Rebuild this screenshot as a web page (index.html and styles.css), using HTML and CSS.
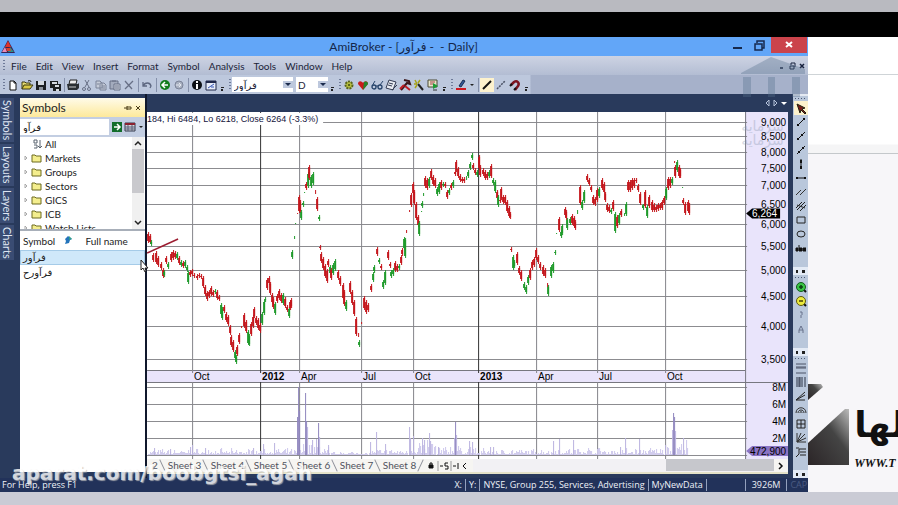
FILE: index.html
```html
<!DOCTYPE html>
<html lang="en">

<head>
    <meta charset="UTF-8">
    <meta name="viewport" content="width=device-width, initial-scale=1.0">
    <title>AmiBroker</title>
    <link rel="stylesheet" href="styles.css">
</head>

<body>
    <div class="strip-top"></div>
    <div class="strip-black"></div>

    <div class="desktop">
        <div class="app">
            <header class="titlebar">
                <svg class="logo" viewBox="0 0 14 14"><path d="M7 0L14 13H0z" fill="#3b2352"/><path d="M7 1L10 7H4z" fill="#e0342c"/><path d="M4 7L6 12H1z" fill="#e98bb8"/><path d="M9 7L13 12H7z" fill="#2f8f8a"/><path d="M5 8h4l1 3H6z" fill="#d8432e"/></svg>
                <h1>AmiBroker - [<bdi>فرآور</bdi> -&nbsp; - Daily]</h1>
                <div class="win-buttons">
                    <button aria-label="Minimize"><svg viewBox="0 0 14 14"><path d="M2 10h9" stroke="#16294d" stroke-width="2"/></svg></button>
                    <button aria-label="Restore"><svg viewBox="0 0 14 14"><path d="M2 6h7v6H2zM4 5V3h7v7H9M4 3h7M2 6h7" fill="none" stroke="#16294d" stroke-width="1.5"/></svg></button>
                    <button class="close" aria-label="Close"><svg viewBox="0 0 14 14"><path d="M4 4l6 5M10 4l-6 5" stroke="#fff" stroke-width="2"/></svg></button>
                </div>
            </header>

            <nav class="menubar">
                <i class="grip"></i>
                <button>File</button>
                <button>Edit</button>
                <button>View</button>
                <button>Insert</button>
                <button>Format</button>
                <button>Symbol</button>
                <button>Analysis</button>
                <button>Tools</button>
                <button>Window</button>
                <button>Help</button>
                <div class="mdi-buttons">
                    <button aria-label="Minimize chart"><svg viewBox="0 0 10 10"><path d="M3 7h3" stroke="#16203c" stroke-width="1.5"/></svg></button>
                    <button aria-label="Restore chart"><svg viewBox="0 0 10 10"><path d="M3 5h4v3H3zM4 4V2h4v4" fill="none" stroke="#16203c"/></svg></button>
                    <button aria-label="Close chart"><svg viewBox="0 0 10 10"><path d="M3 3l4 4M7 3L3 7" stroke="#16203c" stroke-width="1.5"/></svg></button>
                </div>
            </nav>

            <div class="toolbar">
                <i class="grip"></i>
                <button aria-label="New"><svg viewBox="0 0 14 14"><path d="M4 3h4l2 2v7H4z" fill="#fff" stroke="#111"/><path d="M8 3v2h2" fill="none" stroke="#111"/></svg></button>
                <button aria-label="Open"><svg viewBox="0 0 14 14"><path d="M2 11V4h3l1 1h4v2" fill="#e6dc72" stroke="#3d3a10"/><path d="M2 11l2-4h9l-3 4z" fill="#d9c845" stroke="#3d3a10"/><path d="M8 3c2-1 3 0 3 1" fill="none" stroke="#111"/></svg></button>
                <button aria-label="Save"><svg viewBox="0 0 14 14"><path d="M2 3h10v9H2z" fill="#1c1f22"/><path d="M4 3h6v4H4z" fill="#d5dae0"/><path d="M5 9h4v3H5z" fill="#8b9199"/></svg></button>
                <button aria-label="Save all"><svg viewBox="0 0 14 14"><path d="M2 3h8v7H2zM5 6h8v7H5z" fill="#1c1f22"/><path d="M4 4h5v2H4zM7 7h4v2H7zM8 11h3v2H8z" fill="#d5dae0"/></svg></button>
                <i class="sep"></i>
                <button aria-label="Print"><svg viewBox="0 0 14 14"><path d="M4 2h7l-1 4H3z" fill="#eee" stroke="#222"/><path d="M1 6h11l1-1v5l-2 2H2z" fill="#2b2f33"/><path d="M3 9h7" stroke="#ccc"/></svg></button>
                <button aria-label="Cut"><svg viewBox="0 0 14 14"><path d="M5 2l4 7M9 2L5 9" stroke="#687086" fill="none"/><circle cx="4" cy="11" r="1.5" fill="none" stroke="#687086"/><circle cx="9" cy="11" r="1.5" fill="none" stroke="#687086"/></svg></button>
                <button aria-label="Copy"><svg viewBox="0 0 14 14"><path d="M2 3h4l2 2v5H2zM6 5h4l2 2v5H6zM8 8h3M8 10h3M3 6h2" fill="#c5cbd8" stroke="#7b8398"/></svg></button>
                <button aria-label="Paste"><svg viewBox="0 0 14 14"><path d="M2 3h8v8H2z" fill="#a3abbd" stroke="#687086"/><path d="M6 6h6v6H6zM7 8h4M7 10h4M4 3h4" fill="#d0d5e0" stroke="#687086"/></svg></button>
                <button aria-label="Delete"><svg viewBox="0 0 14 14"><path d="M3 3l7 8M11 3L3 11" stroke="#687086" stroke-width="1.3"/></svg></button>
                <i class="sep"></i>
                <button aria-label="Undo"><svg viewBox="0 0 14 14"><path d="M3 4v4h4M3 8c2-4 7-4 8 0l-1 2" fill="none" stroke="#5d6780" stroke-width="1.3"/></svg></button>
                <i class="sep"></i>
                <button aria-label="Back"><svg viewBox="0 0 14 14"><circle cx="7" cy="7" r="5" fill="#137b1d"/><path d="M10 7H4M7 4L4 7l3 3" fill="none" stroke="#fff" stroke-width="1.5"/></svg></button>
                <button aria-label="Forward"><svg viewBox="0 0 14 14"><circle cx="7" cy="7" r="4" fill="#a8b0c0" stroke="#7b8499"/><path d="M4 7h5M7 5l2 2-2 2" fill="none" stroke="#e4e8f0"/></svg></button>
                <i class="sep"></i>
                <button aria-label="Information"><svg viewBox="0 0 14 14"><circle cx="7" cy="7" r="5" fill="#0c0f14"/><path d="M7 3v2M7 6v5" stroke="#fff" stroke-width="2"/></svg></button>
                <button aria-label="Properties"><svg viewBox="0 0 14 14"><path d="M2 3h10v9H2z" fill="#e7ecf8" stroke="#20284a"/><path d="M2 4h10" stroke="#20284a" stroke-width="2"/><path d="M4 10l6-4M7 9h3" stroke="#3554b4"/></svg></button>
                <i class="more"></i>
                <i class="grip"></i>
                <span class="combo combo-symbol"><select aria-label="Symbol"><option>فرآور</option></select></span>
                <span class="combo combo-period"><select aria-label="Period"><option>D</option></select></span>
                <i class="more"></i>
                <i class="grip"></i>
                <button aria-label="Preferences"><svg viewBox="0 0 14 14"><circle cx="7" cy="7" r="3.5" fill="#b5bd3d" stroke="#59641d" stroke-width="2" stroke-dasharray="2 1"/><circle cx="7" cy="7" r="1" fill="#3f4812"/></svg></button>
                <button aria-label="Favorites"><svg viewBox="0 0 14 14"><path d="M7 12L2 6c0-4 4-3 5-1 1-2 5-3 5 1z" fill="#c91a1a"/><path d="M7 12l5-6c0-3-3-3-4-2z" fill="#25852b"/></svg></button>
                <button aria-label="Explore"><svg viewBox="0 0 14 14"><circle cx="4" cy="9" r="2" fill="none" stroke="#26436a" stroke-width="1.3"/><circle cx="10" cy="9" r="2" fill="none" stroke="#26436a" stroke-width="1.3"/><path d="M2 8l3-5M6 8h2M10 7l3-4" stroke="#26436a"/></svg></button>
                <button aria-label="Notes"><svg viewBox="0 0 14 14"><path d="M5 2l7 2-3 8-7-2z" fill="#e8ebf2" stroke="#333b52"/><path d="M5 5l4 1M4 7l4 1M8 12l5-5" stroke="#333b52"/></svg></button>
                <button aria-label="Formula"><svg viewBox="0 0 14 14"><path d="M6 2l5 1 1 3-3-1-6 7" fill="none" stroke="#3a1518" stroke-width="2"/><path d="M2 11l4-4M7 8l5 4" stroke="#bd1d25" stroke-width="2"/></svg></button>
                <button aria-label="Wizard"><svg viewBox="0 0 14 14"><path d="M6 6l5 6" stroke="#222" stroke-width="2"/><path d="M3 2l2 4M8 2L6 5M2 6h3M3 10l2-3" stroke="#a8a315" stroke-width="1.5"/></svg></button>
                <button aria-label="Run"><svg viewBox="0 0 14 14"><path d="M2 2h9v7H2z" fill="#e8e6c8" stroke="#4b4b35"/><path d="M4 4h5M4 6h3" stroke="#a6434b"/><path d="M7 5l5 3-5 3z" fill="#1e9a34"/><path d="M7 12h4" stroke="#333"/></svg></button>
                <i class="more"></i>
                <i class="grip"></i>
                <button aria-label="Line color"><svg viewBox="0 0 14 14"><path d="M5 8l4-6 2 1-4 6z" fill="#315a9a" stroke="#1d2c50"/><path d="M2 11h10" stroke="#cf1820" stroke-width="2"/></svg></button>
                <i class="drop"></i>
                <i class="sep"></i>
                <button class="active" aria-label="Solid line"><svg viewBox="0 0 14 14"><path d="M3 11l8-8" stroke="#111" stroke-width="2"/></svg></button>
                <button aria-label="Dotted line"><svg viewBox="0 0 14 14"><path d="M3 11l8-8" stroke="#4a5164" stroke-width="1.5" stroke-dasharray="2 1"/></svg></button>
                <button aria-label="Magnet"><svg viewBox="0 0 14 14"><path d="M3 7l3-3c3-2 6 1 4 4l-3 4" fill="none" stroke="#7b1420" stroke-width="2.5"/><path d="M2 8l2-2M6 12l2-2" stroke="#111" stroke-width="2"/></svg></button>
                <i class="more"></i>
            </div>

            <main class="workspace">
                <div class="side-tabs">
                    <button>Symbols</button>
                    <button>Layouts</button>
                    <button>Layers</button>
                    <button>Charts</button>
                </div>

                <aside class="panel">
                    <div class="panel-head">
                        <h2>Symbols</h2>
                        <button aria-label="Pin"><svg viewBox="0 0 10 10"><path d="M1 5h3M4 3v4M4 4h4v2H4" fill="none" stroke="#4a3c18"/></svg></button>
                        <button aria-label="Close panel"><svg viewBox="0 0 10 10"><path d="M3 3l4 4M7 3L3 7" stroke="#4a3c18"/></svg></button>
                    </div>
                    <div class="panel-search">
                        <input type="text" value="فرآو" aria-label="Search symbols">
                        <button aria-label="Go"><svg viewBox="0 0 12 12"><path d="M1 1h10v10H1z" fill="#126d2b"/><path d="M3 6h5M6 3l3 3-3 3" fill="none" stroke="#fff" stroke-width="1.5"/></svg></button>
                        <button aria-label="Columns"><svg viewBox="0 0 12 12"><path d="M1 2h10v8H1z" fill="#d8d8de" stroke="#343a4c"/><path d="M1 3h10" stroke="#8c2230" stroke-width="2"/><path d="M1 6h10M1 8h10M4 4v6M8 4v6" stroke="#596179"/></svg></button>
                        <i class="drop"></i>
                    </div>
                    <div class="tree-box">
                        <ul class="tree">
                            <li><svg viewBox="0 0 24 12"><path d="M11 2h3v3h-3zM11 7h3v3h-3M17 2v8M15 8l2 2 2-2" fill="none" stroke="#59636e"/></svg>All</li>
                            <li><svg viewBox="0 0 24 12"><path d="M2 4l2 2-2 2z" fill="none" stroke="#aaa"/><path d="M9 10V3h3l1 1h5v6z" fill="#f4ee8e" stroke="#6d6a20"/></svg>Markets</li>
                            <li><svg viewBox="0 0 24 12"><path d="M2 4l2 2-2 2z" fill="none" stroke="#aaa"/><path d="M9 10V3h3l1 1h5v6z" fill="#f4ee8e" stroke="#6d6a20"/></svg>Groups</li>
                            <li><svg viewBox="0 0 24 12"><path d="M2 4l2 2-2 2z" fill="none" stroke="#aaa"/><path d="M9 10V3h3l1 1h5v6z" fill="#f4ee8e" stroke="#6d6a20"/></svg>Sectors</li>
                            <li><svg viewBox="0 0 24 12"><path d="M2 4l2 2-2 2z" fill="none" stroke="#aaa"/><path d="M9 10V3h3l1 1h5v6z" fill="#f4ee8e" stroke="#6d6a20"/></svg>GICS</li>
                            <li><svg viewBox="0 0 24 12"><path d="M2 4l2 2-2 2z" fill="none" stroke="#aaa"/><path d="M9 10V3h3l1 1h5v6z" fill="#f4ee8e" stroke="#6d6a20"/></svg>ICB</li>
                            <li><svg viewBox="0 0 24 12"><path d="M2 4l2 2-2 2z" fill="none" stroke="#aaa"/><path d="M9 10V3h3l1 1h5v6z" fill="#f4ee8e" stroke="#6d6a20"/></svg>Watch Lists</li>
                        </ul>
                        <div class="scroll-v">
                            <svg viewBox="0 0 12 12"><path d="M3 8l3-3 3 3" fill="none" stroke="#222" stroke-width="1.5"/></svg>
                            <i></i>
                            <svg viewBox="0 0 12 12"><path d="M3 4l3 3 3-3" fill="none" stroke="#222" stroke-width="1.5"/></svg>
                        </div>
                    </div>
                    <table class="symbols">
                        <thead>
                            <tr>
                                <th>Symbol <svg viewBox="0 0 10 10"><path d="M5 1l4 3-2 1-1 3-4 1 1-3-1-2z" fill="#2474bb"/><path d="M6 1l3 3-3 1z" fill="#31a08a"/></svg></th>
                                <th>Full name</th>
                            </tr>
                        </thead>
                        <tbody>
                            <tr class="selected"><td>فرآور</td><td></td></tr>
                            <tr><td>فرآورح</td><td></td></tr>
                        </tbody>
                    </table>
                    <svg class="cursor" viewBox="0 0 9 14"><path d="M1 1v10l2-2 2 4 1-1-1-3h3z" fill="#fff" stroke="#222"/></svg>
                </aside>

                <section class="chart-window">
                    <div class="chart-head">
                        <svg viewBox="0 0 24 10"><path d="M5 2L2 5l3 3zM10 2l3 3-3 3z" fill="none" stroke="#b8c4dc"/><path d="M17 4h6l-3 3z" fill="#fff"/></svg>
                    </div>
                    <svg id="chart" class="chart" viewBox="147 112 641 347"></svg>
                    <div class="sheets">
                        <button class="first">2</button>
                        <button>Sheet 3</button>
                        <button>Sheet 4</button>
                        <button>Sheet 5</button>
                        <button>Sheet 6</button>
                        <button>Sheet 7</button>
                        <button>Sheet 8</button>
                        <svg class="sheet-icons" viewBox="0 0 48 14"><path d="M4 6h4v3H4z" fill="#111" stroke="#111"/><path d="M5 6V4h2v2" fill="none" stroke="#111"/><path d="M13 2v10M26 2v10" stroke="#999"/><path d="M15 7h3M23 4h-3v3h3v3h-3M28 7h3M33 4v6M41 4l-3 3 3 3" fill="none" stroke="#111"/></svg>
                        <div class="scroll-h"><i></i></div>
                        <svg class="arrow" viewBox="0 0 10 14"><path d="M3 4l3 3-3 3" fill="none" stroke="#111" stroke-width="1.5"/></svg>
                    </div>
                </section>

                <div class="draw-tools">
                    <div class="group tall">
                        <i class="grip-h"></i>
                        <button class="active" aria-label="Select"><svg viewBox="0 0 14 14"><path d="M3 3l8 4-3 1 4 4-1 1-4-4-1 3z" fill="#7b1c18" stroke="#221"/></svg></button>
                        <button aria-label="Trend line"><svg viewBox="0 0 14 14"><path d="M3 11l8-8" stroke="#111"/><path d="M3 9h2v2H3zM9 3h2v2H9z" fill="#111"/></svg></button>
                        <button aria-label="Ray"><svg viewBox="0 0 14 14"><path d="M3 11l8-8" stroke="#111"/><path d="M3 9h2v2H3zM7 5h2v2H7z" fill="#111"/></svg></button>
                        <button aria-label="Extended line"><svg viewBox="0 0 14 14"><path d="M3 11l8-8" stroke="#111"/><path d="M4 8h2v2H4zM8 4h2v2H8z" fill="#111"/></svg></button>
                        <button aria-label="Vertical line"><svg viewBox="0 0 14 14"><path d="M7 2v10" stroke="#111"/><path d="M6 3h2v3H6zM6 9h2v3H6z" fill="#111"/></svg></button>
                        <button aria-label="Horizontal line"><svg viewBox="0 0 14 14"><path d="M2 7h10" stroke="#111"/><path d="M2 6h2v2H2zM10 6h2v2h-2z" fill="#111"/></svg></button>
                        <button aria-label="Parallel lines"><svg viewBox="0 0 14 14"><path d="M2 10l5-5M6 10l6-6" stroke="#333"/></svg></button>
                        <button aria-label="Pitchfork"><svg viewBox="0 0 14 14"><path d="M2 9l6-6M3 11l8-8M6 12l6-6M3 6l8 3" stroke="#222"/></svg></button>
                        <button aria-label="Rectangle"><svg viewBox="0 0 14 14"><path d="M3 4h8v6H3z" fill="none" stroke="#222"/></svg></button>
                        <button aria-label="Ellipse"><svg viewBox="0 0 14 14"><ellipse cx="7" cy="7" rx="4" ry="3" fill="none" stroke="#222"/></svg></button>
                        <button aria-label="Text"><svg viewBox="0 0 14 14"><path d="M2 7h2v3H2zM5 4v6h3V7H5M12 7H9v3h3" fill="#111" stroke="#111"/></svg></button>
                        <i class="more-h"></i>
                    </div>
                    <div class="group mid">
                        <i class="grip-h"></i>
                        <button aria-label="Zoom in"><svg viewBox="0 0 14 14"><path d="M10 10l2 2" stroke="#111" stroke-width="2"/><circle cx="7" cy="7" r="4.5" fill="#38c544" stroke="#125b1c"/><path d="M5 7h4M7 5v4" stroke="#0b3d12" stroke-width="1.5"/></svg></button>
                        <button aria-label="Zoom out"><svg viewBox="0 0 14 14"><path d="M10 10l2 2" stroke="#111" stroke-width="2"/><circle cx="7" cy="7" r="4.5" fill="#ecea3c" stroke="#5a5811"/><path d="M5 7h4" stroke="#44410b" stroke-width="1.5"/></svg></button>
                        <button aria-label="Bar down"><svg viewBox="0 0 14 14"><path d="M6 4h2v3M7 7v3" fill="none" stroke="#66708a"/></svg></button>
                        <button aria-label="Bar up"><svg viewBox="0 0 14 14"><path d="M5 11V8l2-4 2 4v3M5 8h4" fill="none" stroke="#66708a"/></svg></button>
                        <i class="more-h"></i>
                    </div>
                    <div class="group low">
                        <i class="grip-h"></i>
                        <button aria-label="Fibonacci levels"><svg viewBox="0 0 14 14"><path d="M2 3h10M2 6h10M2 7h10M2 12h10" stroke="#4a5266"/></svg></button>
                        <button aria-label="Time zones"><svg viewBox="0 0 14 14"><path d="M3 2v10M5 2v10M6 2v10M8 2v10M11 2v10" stroke="#2d3446"/></svg></button>
                        <button aria-label="Fan"><svg viewBox="0 0 14 14"><path d="M2 11l9-8M2 11l9-5M2 11h9" fill="none" stroke="#222"/></svg></button>
                        <button aria-label="Arcs"><svg viewBox="0 0 14 14"><path d="M2 10c0-7 10-7 10 0M4 10c0-4 6-4 6 0M6 10c0-2 2-2 2 0" fill="none" stroke="#333"/></svg></button>
                        <button aria-label="Gann square"><svg viewBox="0 0 14 14"><path d="M3 3h8v8H3zM7 3v8M3 7h8" fill="none" stroke="#222"/></svg></button>
                        <button aria-label="Gann fan"><svg viewBox="0 0 14 14"><path d="M3 2v9h9M3 11L7 2M3 11l8-8M3 11l9-4" fill="none" stroke="#333"/></svg></button>
                        <button aria-label="Cycles"><svg viewBox="0 0 14 14"><path d="M2 12l3-3V4h7M6 7h6M6 10h6M2 3h3" fill="none" stroke="#222"/></svg></button>
                        <i class="more-h"></i>
                    </div>
                </div>
            </main>

            <footer class="statusbar">
                <span class="help">For Help, press F1</span>
                <span>X:</span>
                <span>Y:</span>
                <span>NYSE, Group 255, Services, Advertising</span>
                <span class="db">MyNewData</span>
                <span class="mem">3926M</span>
                <span class="caps">CAP</span>
            </footer>

            <div class="watermark">
                <svg viewBox="0 0 67 40"><path d="M0 16L30 0l34 12v5H0zM2 20h8v20H2zM27 20h7v20h-7zM51 20h8v20h-8z"/></svg>
                <p>سرمایه<br>سرمایه</p>
            </div>
            <div class="channel">aparat.com/boobgtsi_agah</div>
        </div>

        <div class="page">
            <div class="page-bar"></div>
            <div class="page-band"></div>
            <div class="page-body">
                <svg class="brand-mark" viewBox="0 0 42 90">
                    <defs>
                        <linearGradient id="metal" x1="1" y1="0" x2="0" y2="1">
                            <stop offset="0" stop-color="#bbb"/>
                            <stop offset="0.4" stop-color="#444"/>
                            <stop offset="1" stop-color="#2b2527"/>
                        </linearGradient>
                    </defs>
                    <path d="M0 8l13 0 2 3L0 24z" fill="url(#metal)"/>
                    <path d="M0 67L37 33l4 0v56H0z" fill="url(#metal)"/>
                </svg>
                <div class="brand-text">
                    <b>لها</b>
                    <a href="#">WWW.T</a>
                </div>
            </div>
        </div>
    </div>

    <div class="strip-bottom"></div>

    <script src="chart.js"></script>
</body>

</html>
```
FILE: styles.css
```css
* {
    margin: 0;
    padding: 0;
    box-sizing: border-box;
}

body {
    display: flex;
    flex-direction: column;
    height: 100vh;
    overflow: hidden;
    font-family: Lato, "DejaVu Sans", sans-serif;
    font-size: 10px;
    color: #1c2438;
}

button,
input,
select {
    font: inherit;
    color: inherit;
    border: 0;
    background: none;
}

svg {
    display: block;
    flex: none;
}

.strip-top {
    height: 12px;
    background: #b9bac0;
}

.strip-black {
    height: 25px;
    background: #000;
}

.strip-bottom {
    height: 13px;
    background: #cacbd5;
}

.desktop {
    flex: 1;
    min-height: 0;
    display: grid;
    grid-template-columns: minmax(0, 9fr) minmax(0, 1fr);
}

.app {
    position: relative;
    display: flex;
    flex-direction: column;
    min-height: 0;
    background: #293a5c;
}

/* title and menu */

.titlebar {
    display: flex;
    align-items: center;
    height: 19px;
    background: #62a6f8;
}

.logo {
    width: 14px;
    height: 14px;
    margin-left: 1px;
}

.titlebar h1 {
    flex: 1;
    padding-left: 65px;
    font-size: 12px;
    font-weight: 400;
    text-align: center;
    color: #14264a;
}

.win-buttons {
    display: flex;
    align-self: flex-start;
}

.win-buttons button {
    width: 22px;
    height: 16px;
    padding: 1px 4px;
}

.win-buttons svg {
    width: 14px;
    height: 14px;
}

.win-buttons .close {
    width: 36px;
    padding-left: 11px;
    margin-right: 1px;
    background: #cb434b;
}

.menubar,
.toolbar {
    display: flex;
    align-items: center;
    height: 19px;
}

.menubar {
    gap: 1px;
    background: linear-gradient(#cdd3e3, #b3bdd3);
}

.menubar > button {
    padding: 0 4px;
}

.mdi-buttons {
    display: flex;
    margin-left: auto;
    margin-right: 1px;
}

.mdi-buttons svg {
    width: 10px;
    height: 10px;
}

.toolbar {
    background: linear-gradient(to right, #bdc8dd 530px, #a6b1ca 531px);
}

.grip {
    width: 2px;
    height: 12px;
    margin: 0 1px 0 3px;
    background: repeating-linear-gradient(#6e7a98 0 1px, transparent 1px 3px);
}

.toolbar button,
.draw-tools button {
    width: 14px;
    height: 14px;
}

.toolbar .active,
.draw-tools .active {
    background: #fdf2cd;
}

.sep {
    width: 1px;
    height: 14px;
    margin: 0 1px 0 2px;
    background: #8590aa;
}

.more {
    width: 4px;
    height: 12px;
    margin: 0 2px;
    background: linear-gradient(#222 0 0) center 8px / 3px 1px no-repeat, linear-gradient(#222 0 0) center 10px / 2px 2px no-repeat;
}

.drop {
    margin: 0 2px;
    border: 2px solid transparent;
    border-top-color: #222;
    border-bottom: 0;
}

.combo {
    position: relative;
    height: 15px;
    background: #fff;
}

.combo select {
    appearance: none;
    width: 100%;
    height: 15px;
    padding-left: 2px;
}

.combo::after {
    content: "";
    position: absolute;
    right: 2px;
    top: 6px;
    border: 3px solid transparent;
    border-top-color: #1b2a4c;
    border-bottom: 0;
    outline: 2px solid #bdc8dd;
    background: #bdc8dd;
}

.combo-symbol {
    width: 61px;
    margin-right: 3px;
}

.combo-period {
    width: 32px;
}

/* left side */

.workspace {
    flex: 1;
    min-height: 0;
    display: flex;
}

.side-tabs {
    display: flex;
    flex-direction: column;
    gap: 2px;
    width: 20px;
    padding-top: 4px;
}

.side-tabs button {
    width: 14px;
    padding: 2px 0;
    writing-mode: vertical-rl;
    font-size: 11px;
    line-height: 14px;
    color: #dfe5f2;
    background: #3a4c73;
}

.panel {
    position: relative;
    width: 125px;
    margin-top: 4px;
    margin-bottom: 6px;
    background: #fff;
    color: #222;
}

.panel-head {
    display: flex;
    align-items: center;
    height: 19px;
    padding: 0 2px;
    background: linear-gradient(#fffbe9, #fde99b);
}

.panel-head h2 {
    flex: 1;
    font-size: 12px;
    font-weight: 400;
}

.panel-head svg {
    width: 10px;
    height: 10px;
}

.panel-search {
    display: flex;
    align-items: center;
    height: 20px;
    background: #c3cee2;
}

.panel-search input {
    flex: 1;
    min-width: 0;
    height: 16px;
    margin-right: 2px;
    padding-left: 3px;
    background: #fff;
}

.panel-search svg {
    width: 12px;
    height: 12px;
    margin-right: 1px;
}

.tree-box {
    display: flex;
    height: 94px;
    border-bottom: 2px solid #a8afb9;
}

.tree {
    flex: 1;
    list-style: none;
    overflow: hidden;
}

.tree li {
    display: flex;
    align-items: center;
    height: 14px;
    padding-left: 3px;
}

.tree svg {
    width: 24px;
    height: 12px;
    margin-right: -2px;
}

.scroll-v {
    display: flex;
    flex-direction: column;
    width: 12px;
    margin-right: 1px;
    background: #f0f0f0;
}

.scroll-v i {
    flex: 1;
    margin-bottom: 24px;
    background: #c9c9cd;
}

.symbols {
    width: 100%;
    table-layout: fixed;
    border-collapse: collapse;
}

.symbols th {
    height: 19px;
    padding: 0 3px;
    font-weight: 400;
    text-align: left;
}

.symbols th svg {
    display: inline-block;
    width: 10px;
    height: 10px;
    margin-left: 5px;
}

.symbols td {
    height: 15px;
    padding-left: 3px;
    line-height: 15px;
}

.symbols .selected {
    background: #cfe8fa;
    outline: 1px solid #a5cbe8;
    outline-offset: -1px;
}

.cursor {
    position: absolute;
    left: 120px;
    top: 161px;
    width: 9px;
    height: 14px;
    z-index: 1;
}

/* chart */

.chart-window {
    flex: 1;
    min-width: 0;
    display: flex;
    flex-direction: column;
    border-left: 2px solid #10182c;
    margin-right: 5px;
}

.chart-head {
    display: flex;
    justify-content: flex-end;
    align-items: center;
    height: 18px;
}

.chart-head svg {
    width: 24px;
    height: 10px;
}

.chart {
    flex: 1;
    min-height: 0;
    width: 100%;
    background: #fff;
    font-family: "Liberation Sans", Arial, sans-serif;
    font-size: 10px;
}

.chart .title {
    fill: #14143c;
}

.chart .price {
    text-anchor: end;
}

.sheets {
    display: flex;
    height: 15px;
    margin-bottom: 4px;
    background: #f6f5f2;
    border-bottom: 2px solid #e4e2c8;
    color: #50525c;
}

.sheets button {
    position: relative;
    width: 43px;
    line-height: 13px;
    text-align: center;
}

.sheets .first {
    width: 16px;
}

.sheets button::after {
    content: "";
    position: absolute;
    right: 0;
    top: 0;
    width: 1px;
    height: 13px;
    background: #8d8f98;
    transform: rotate(-25deg);
}

.sheets button:nth-child(7)::after {
    transform: rotate(25deg);
}

.sheet-icons {
    width: 48px;
    height: 14px;
    margin-left: 4px;
}

.scroll-h {
    flex: 1;
    background: #f2f1f4;
}

.scroll-h i {
    display: block;
    width: 36%;
    height: 12px;
    margin-left: auto;
    background: #c6c7cc;
}

.arrow {
    width: 14px;
    height: 14px;
}

/* drawing tools */

.draw-tools {
    display: flex;
    flex-direction: column;
    width: 15px;
    padding-top: 2px;
    background: #e4e9f2;
}

.group {
    display: flex;
    flex-direction: column;
    align-items: center;
    min-height: 0;
    background: #b9c7db;
}

.tall {
    flex: 178 1 0;
}

.mid {
    flex: 81 1 0;
}

.low {
    flex: 121 1 0;
}

.grip-h {
    width: 11px;
    height: 1px;
    margin: 2px 0;
    background: repeating-linear-gradient(to right, #4c5873 0 1px, transparent 1px 3px);
}

.more-h {
    width: 15px;
    height: 8px;
    margin-top: auto;
    background: linear-gradient(#222 0 0) 3px 3px / 2px 3px no-repeat, linear-gradient(#222 0 0) 9px 3px / 3px 3px no-repeat, #e4ebf6;
}

/* status */

.statusbar {
    display: flex;
    align-items: center;
    height: 14px;
    background: #22325a;
    color: #eef1f8;
    font-family: "Open Sans", sans-serif;
    font-size: 9px;
    line-height: 12px;
}

.statusbar span {
    padding: 0 3px;
    border-right: 1px solid #93a0bd;
    white-space: nowrap;
}

.statusbar .help {
    flex: 1;
    padding-left: 2px;
    border: 0;
}

.statusbar .mem {
    margin-left: 38px;
    padding: 0 6px;
    border-left: 1px solid #93a0bd;
}

.statusbar .caps {
    color: #4b5b82;
    border: 0;
    padding-right: 1px;
}

/* overlays */

.watermark {
    position: absolute;
    right: 0;
    top: 20px;
    width: 67px;
    color: #8594ad;
    opacity: 0.35;
    pointer-events: none;
}

.watermark svg {
    width: 67px;
    height: 40px;
    fill: #56708c;
}

.watermark p {
    margin-top: 22px;
    font-family: "DejaVu Sans", sans-serif;
    font-size: 14px;
    line-height: 14px;
}

.channel {
    position: absolute;
    left: 12px;
    bottom: 6px;
    font-family: "DejaVu Sans", sans-serif;
    font-size: 20px;
    line-height: 26px;
    font-weight: 700;
    color: #fff;
    opacity: 0.8;
    text-shadow: 1px 1px 1px #bbb;
}

/* web page behind */

.page {
    display: flex;
    flex-direction: column;
    overflow: hidden;
    background: #fff;
}

.page-bar {
    height: 38px;
    border-bottom: 1px solid #cfd4d7;
}

.page-band {
    height: 79px;
    border-bottom: 1px solid #c4c8cb;
    background: linear-gradient(#fff 69px, #f5f5f6 70px);
}

.page-body {
    flex: 1;
    display: flex;
    align-items: flex-end;
    padding-bottom: 19px;
    background: #f7f6f9;
}

.brand-mark {
    flex: none;
    width: 42px;
    height: 90px;
    margin-bottom: 7px;
}

.brand-text {
    flex: none;
    padding-left: 4px;
    color: #111;
}

.brand-text b {
    display: block;
    font-family: "DejaVu Sans", sans-serif;
    font-size: 36px;
    line-height: 56px;
}

.brand-text a {
    display: block;
    font-family: "Liberation Serif", serif;
    font-size: 12px;
    line-height: 20px;
    font-weight: 700;
    font-style: italic;
    color: #111;
    text-decoration: none;
}
```
FILE: chart.js
```javascript
var oChart = document.getElementById("chart");
var html = "";

function line(x1, y1, x2, y2, color, width) {
    html += '<line x1="' + x1 + '" y1="' + y1 + '" x2="' + x2 + '" y2="' + y2 + '" stroke="' + color + '" stroke-width="' + (width || 1) + '"/>';
}

function rect(x, y, w, h, color) {
    html += '<rect x="' + x + '" y="' + y + '" width="' + w + '" height="' + h + '" fill="' + color + '"/>';
}

function text(x, y, str, attrs) {
    html += '<text x="' + x + '" y="' + y + '" ' + (attrs || "") + '>' + str + '</text>';
}

// axis backgrounds
rect(745, 112, 43, 347, "#e9e4fb");
rect(147, 370, 598, 12, "#e9e4fb");

// price levels, log scale
var prices = [9000, 8500, 8000, 7500, 7000, 6500, 6000, 5500, 5000, 4500, 4000, 3500];
for (var i = 0; i < prices.length; i++) {
    var y = Math.round(122 + Math.log(9000 / prices[i]) * 251);
    line(147, y + 0.5, 747, y + 0.5, "#8c8c90");
    text(786, y + 4, prices[i].toLocaleString("en-US"), 'class="price"');
}

// volume levels
var volumes = ["8M", "6M", "4M", "2M", ""];
for (i = 0; i < volumes.length; i++) {
    line(147, 387.5 + i * 17, 747, 387.5 + i * 17, "#8c8c90");
    text(786, 391 + i * 17, volumes[i], 'class="price"');
}

line(147, 370.5, 745, 370.5, "#77777f");
line(147, 382.5, 788, 382.5, "#77777f");
line(745.5, 112, 745.5, 459, "#77777f");

var dates = [[192, "Oct"], [260, "2012"], [299, "Apr"], [361, "Jul"], [413, "Oct"], [478, "2013"], [536, "Apr"], [597, "Jul"], [665, "Oct"]];
for (i = 0; i < dates.length; i++) {
    var year = dates[i][1].length == 4;
    line(dates[i][0] + 0.5, 112, dates[i][0] + 0.5, 373, year ? "#333" : "#85858a");
    line(dates[i][0] + 0.5, 382, dates[i][0] + 0.5, 459, year ? "#333" : "#85858a");
    text(dates[i][0] + 2, 380, dates[i][1], year ? 'font-weight="700"' : "");
}

// volume bars: background noise plus the peaks
var seed = 7;
function rnd() {
    seed = (seed * 16807) % 2147483647;
    return seed / 2147483647;
}
var busy = [[148, 298, 6], [299, 330, 14], [331, 368, 3], [369, 408, 6], [409, 436, 18], [437, 480, 10], [481, 550, 6], [551, 664, 8], [665, 688, 16]];
for (i = 0; i < busy.length; i++) {
    for (var x = busy[i][0]; x < busy[i][1]; x++) {
        var h = Math.round(rnd() * rnd() * busy[i][2]) + 1;
        rect(x, 455 - h, 1, h, "#cdc7ec");
    }
}
var peaks = [[154, 7], [170, 6], [190, 8], [192, 10], [205, 7], [253, 7], [263, 11], [274, 12], [297, 38], [298, 68], [299, 44], [305, 62], [306, 34], [307, 28], [312, 15], [316, 16], [318, 32], [319, 18], [328, 10], [370, 13], [376, 23], [385, 11], [409, 28], [410, 17], [413, 19], [422, 17], [424, 15], [429, 22], [430, 14], [438, 8], [454, 17], [455, 33], [456, 20], [469, 14], [472, 13], [490, 8], [493, 8], [553, 14], [559, 16], [573, 15], [620, 8], [625, 17], [639, 16], [665, 10], [672, 25], [673, 42], [674, 38], [675, 24], [683, 17]];
for (i = 0; i < peaks.length; i++) {
    rect(peaks[i][0], 455 - peaks[i][1], 1, peaks[i][1], peaks[i][1] > 30 ? "#8f86bd" : "#bab2e0");
}

// x, high, low, colour (r = down, g = up)
var candles = "148 232 243 r,150 234 244 r,151 240 246 g,153 253 262 r,156 251 264 r,158 256 267 r,161 262 270 r,163 268 278 r,164 270 277 g,166 256 264 r,168 262 269 g,171 252 262 r,173 250 260 r,175 251 259 r,177 252 260 g,179 256 265 r,181 260 267 g,183 261 268 r,185 260 268 g,187 265 272 g,188 271 284 g,190 270 277 r,192 269 276 r,194 273 278 r,197 274 280 r,199 273 278 r,201 274 279 r,203 276 288 r,205 285 296 r,207 291 301 r,209 290 298 r,211 286 296 r,213 290 297 r,215 289 294 g,217 290 300 r,219 295 301 r,221 303 316 g,222 307 320 g,224 305 313 r,226 312 322 r,228 315 326 r,230 325 335 r,231 335 347 r,233 340 352 r,235 350 360 g,236 355 364 g,237 345 356 r,239 333 344 r,241 326 328 r,244 313 328 r,246 320 333 r,248 330 345 g,249 334 346 g,251 322 336 r,253 315 328 r,254 307 318 r,256 316 325 r,258 318 330 r,260 323 333 r,262 312 325 g,264 300 315 g,265 297 302 g,267 278 290 r,269 276 285 r,270 282 295 r,272 293 304 r,273 297 309 r,275 302 315 g,277 294 303 r,279 289 300 r,281 293 303 r,283 293 305 g,285 297 308 r,287 305 312 r,289 307 318 g,290 300 310 r,291 298 308 r," +
    "292 250 259 g,294 236 239 g,295 223 224 g,297 213 214 r,299 195 213 r,300 200 213 r,301 210 220 g,303 201 207 g,304 192 193 g,306 182 190 r,308 172 188 g,309 165 180 r,311 175 188 g,313 172 185 g,315 190 194 r,317 197 211 r,319 215 221 g,320 245 250 r,321 252 263 r,323 257 270 r,325 264 278 r,327 269 283 r,328 259 267 r,330 265 275 g,331 268 280 r,333 263 275 g,335 259 271 g,338 270 280 r,340 276 286 r,343 283 300 r,344 290 306 r,346 300 311 g,350 281 294 r,352 290 305 r,354 300 316 r,356 317 336 r,358 333 337 r,359 340 347 g,361 322 324 r,364 296 310 r,366 300 314 r,368 303 312 r,371 284 292 r,373 272 282 g,374 265 273 g,377 247 256 r,379 258 264 g,381 264 270 r,383 280 289 g,385 270 285 g,388 250 260 r,390 262 268 r,391 270 278 g,393 268 276 g,395 261 272 r,397 264 272 r,399 264 270 g,401 255 265 r,402 248 256 r,404 237 250 g,405 238 258 g,406 230 233 r,409 210 212 r,411 193 207 r,413 182 195 r,414 190 205 r,416 202 220 r,418 215 227 r,419 221 236 g,421 211 212 g,422 201 208 g,423 193 196 g," +
    "425 176 188 r,427 178 190 r,429 177 188 g,431 169 180 r,433 175 186 r,435 178 188 r,437 187 196 g,439 182 194 g,441 180 190 r,443 182 187 g,445 182 188 r,447 190 199 r,449 188 195 g,451 183 190 r,453 180 188 g,455 170 176 r,456 160 172 r,458 167 178 r,460 174 182 r,462 177 183 r,464 177 183 r,466 176 180 g,468 170 178 g,470 162 170 g,472 153 160 g,473 163 170 r,475 168 175 r,477 170 177 g,479 155 170 r,480 165 177 r,483 168 176 r,485 170 180 r,487 172 180 r,489 170 178 g,491 164 178 r,493 178 185 g,495 180 193 g,497 190 200 r,498 195 207 g,500 198 203 r,501 187 200 r,503 195 204 r,505 195 205 r,507 200 213 r,509 206 218 r,510 212 219 r,511 247 252 r,513 255 270 g,514 260 268 g,517 252 265 r,519 266 275 r,521 270 281 r,524 282 290 g,526 285 294 g,528 275 285 g,530 268 280 r,532 260 270 r,534 257 267 r,536 248 260 r,538 255 264 r,540 262 270 r,543 265 276 r,545 268 278 r,547 283 287 r,548 285 296 g,551 265 278 g,553 262 273 g,555 250 255 g,556 233 234 g," +
    "559 217 232 r,561 230 238 g,562 224 235 g,565 207 217 r,566 210 220 r,567 218 230 g,570 217 225 g,572 214 225 r,574 216 228 r,575 220 230 r,577 210 214 g,580 185 205 r,582 200 210 g,584 190 203 g,587 174 182 r,589 178 186 r,591 185 192 r,593 195 205 r,595 197 206 r,597 188 202 r,599 187 198 g,602 178 190 r,604 182 194 r,605 192 202 r,607 203 212 r,609 205 213 r,611 208 214 g,613 200 211 r,615 212 233 g,617 215 228 r,619 213 225 g,621 209 217 r,624 213 216 g,626 202 216 g,628 180 192 r,630 180 192 r,632 178 190 r,634 178 188 r,636 178 183 r,638 184 192 r,640 192 205 r,642 205 208 g,643 204 210 g,645 190 208 r,647 205 218 g,649 195 208 r,652 200 212 r,654 203 212 r,656 205 212 r,658 203 211 r,660 203 210 r,662 200 210 r,664 196 205 r,666 187 200 g,668 177 190 r,670 177 188 r,672 177 185 g,674 161 163 r,675 165 178 r,677 160 172 g,679 165 178 r,680 168 178 r,682 187 188 g,683 198 205 r,685 202 215 r,688 200 213 r,689 203 215 r";
var list = candles.split(",");
for (i = 0; i < list.length; i++) {
    var c = list[i].split(" ");
    var color = c[3] == "r" ? "#c4161c" : "#1f9a2b";
    var len = c[2] - c[1];
    rect(c[0], +c[1], 1, len, color);
    if (len > 4) {
        rect(c[0] - 1, +c[1] + 2, 2, len - 4, color);
    }
}

// trend line
line(147, 253, 178, 239, "#9c1c30", 1.5);

// chart title
rect(147, 113, 176, 12, "#fff");
text(147, 122, "184, Hi 6484, Lo 6218, Close 6264 (-3.3%)", 'class="title" font-size="9"');

// last values
html += '<path d="M746 213.5l6-5h28v10h-28z" fill="#000"/>';
text(777, 217, "6,264", 'class="price" fill="#fff"');
html += '<path d="M746 451l6-5h36v10h-36z" fill="#8a74c4"/>';
text(786, 455, "472,900", 'class="price"');

oChart.innerHTML = html;
```
